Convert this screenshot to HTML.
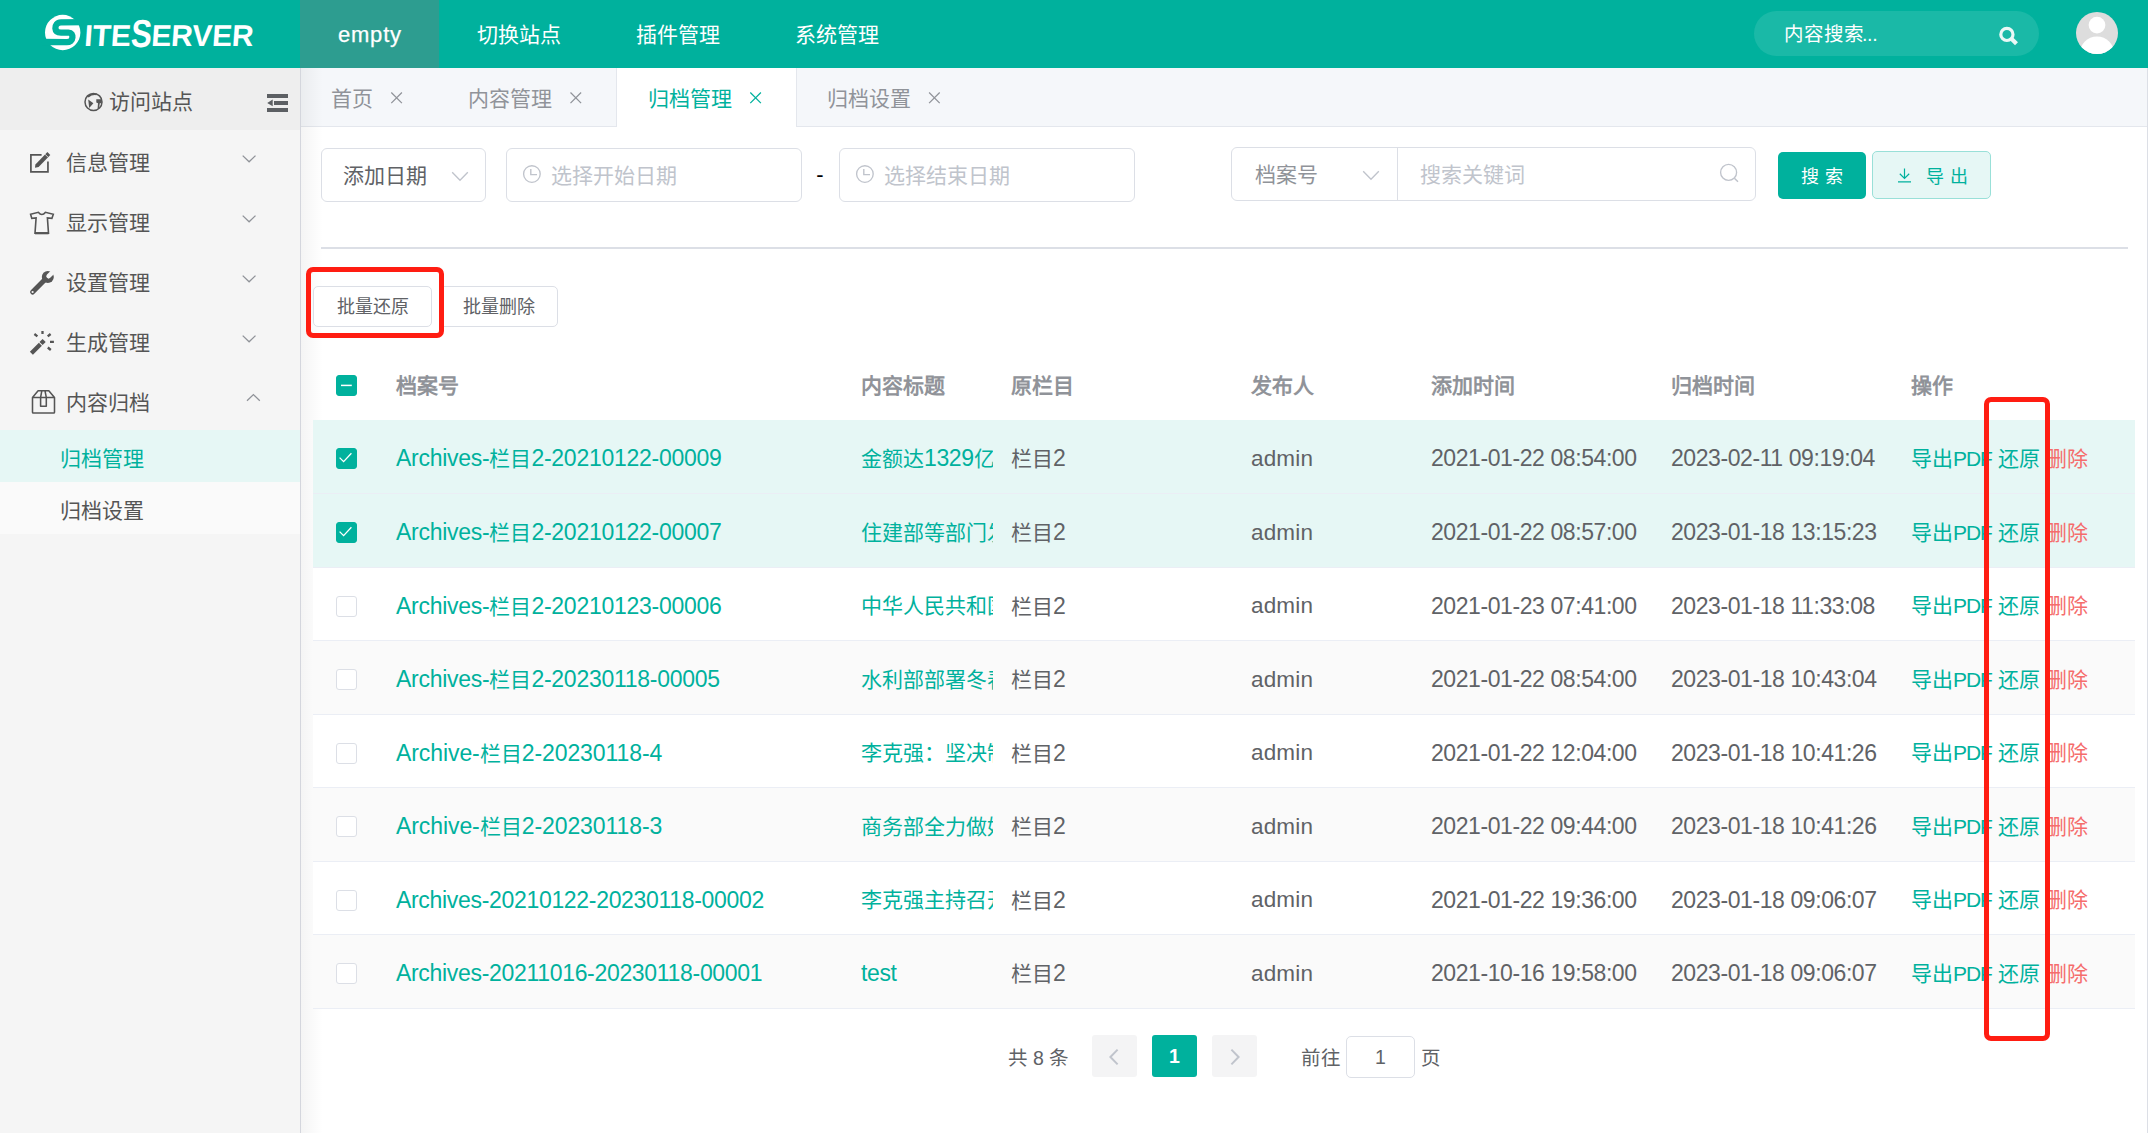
<!DOCTYPE html>
<html lang="zh-CN">
<head>
<meta charset="utf-8">
<title>归档管理 - SiteServer</title>
<style>
html,body{margin:0;padding:0;font-family:"Liberation Sans",sans-serif}
body{width:2148px;height:1133px;position:relative;overflow:hidden;background:#fff;font-family:"Liberation Sans",sans-serif;color:#606266;font-size:21px}
*{box-sizing:border-box}
.a{position:absolute;white-space:nowrap}
.j{display:inline-block;text-align:justify;text-align-last:justify;letter-spacing:0;text-indent:0}
div.j{display:block}
svg{position:absolute;overflow:visible}

/* ---------- top header ---------- */
#hdr{left:0;top:0;width:2148px;height:68px;background:#00b19d}
#logo-txt{left:83px;top:7.8px;height:50px;line-height:50px;color:#fff;font-weight:bold;font-size:30px;letter-spacing:-0.15px;transform:skewX(-4deg);transform-origin:0 100%}
#logo-txt b{font-size:39px;position:relative;top:0.5px;display:inline-block;transform:scaleX(.8);margin:0 -2.6px}
.nav{top:0;height:68px;line-height:70px;color:#fff;font-size:21px;text-align:center}
#nav0{left:300px;width:139px;background:#2d9d90}
#nav1{left:476.5px;width:84px}
#nav2{left:635.5px;width:84px}
#nav3{left:794.5px;width:84px}
#hsearch{left:1754px;top:11px;width:285px;height:45px;border-radius:23px;background:#1ab9a7}
#hsearch-t{left:1784px;top:11px;height:45px;line-height:46px;font-size:19.5px;color:#fff;letter-spacing:-0.35px}
#avatar{left:2076px;top:12px;width:42px;height:42px;border-radius:50%;background:#ddd;overflow:hidden}

/* ---------- sidebar ---------- */
#side{left:0;top:68px;width:301px;height:1065px;background:#f5f5f5;border-right:1px solid #d4d6dd}
#visit{left:0;top:68px;width:300px;height:62px;background:#eee}
#visit-t{left:109px;top:68px;height:62px;line-height:68px;font-size:21px;color:#555}
.mi{left:66px;height:60px;line-height:62px;font-size:21px;color:#555}
.sub{left:0;width:300px;height:52px}
.sub-t{left:60px;height:52px;line-height:58px;font-size:21px}

/* ---------- tab bar ---------- */
#tabs{left:301px;top:68px;width:1847px;height:59px;background:#f5f7fa;border-bottom:1px solid #e4e7ed}
#tab-act{left:616px;top:68px;width:181px;height:59px;background:#fff;border-left:1px solid #e4e7ed;border-right:1px solid #e4e7ed}
.tb{top:68px;height:58px;line-height:62px;font-size:21px;color:#909399}
#sshadow{left:301px;top:68px;width:22px;height:1065px;background:linear-gradient(90deg,rgba(0,0,0,.045),rgba(0,0,0,0))}
#redge{left:2147px;top:68px;width:1px;height:1065px;background:#dcdfe6}

/* ---------- main ---------- */
.inp{background:#fff;border:1px solid #dcdfe6;border-radius:6px}
.ft{height:54px;line-height:55px;font-size:21px}
.ph{color:#c0c4cc}
.btn{background:#fff;border:1px solid #dcdfe6;border-radius:5px}
.bt{height:41px;line-height:42px;font-size:18px;color:#606266;text-align:center}
.cb{width:21px;height:21px;border:1px solid #dcdfe6;border-radius:3px;background:#fff}
.cb.on{background:#00b19d;border-color:#00b19d}
.th{top:350px;height:70px;line-height:72px;font-size:21px;font-weight:bold;color:#909399}
.row{left:313px;width:1822px;border-bottom:1px solid #ebeef5;font-size:21px;color:#606266}
.row span{top:0}
.lk{color:#00b19d}
.c1{font-size:23px}
.cj{font-size:21px;font-style:normal}
.lt{font-size:23px;font-weight:normal;letter-spacing:-0.4px}
.c2{width:132px;overflow:hidden;letter-spacing:0.1px}
.c3{letter-spacing:0.2px}
.c4{font-size:22.5px;letter-spacing:0.17px}
.c5{font-size:23px;letter-spacing:-0.42px}
.c6{letter-spacing:-1.1px}
.pg{top:1036px;height:42px;line-height:44px;font-size:19.5px;color:#606266}
.pb{top:1035px;width:45px;height:42px;border-radius:3px;background:#f4f4f5}
.red{border:5px solid #ff1d12;border-radius:7px}
</style>
</head>
<body>

<!-- ================= HEADER ================= -->
<div class="a" id="hdr"></div>
<svg style="left:44px;top:14px" width="38" height="38" viewBox="44 14 38 38">
  <circle cx="62.7" cy="32.5" r="17.7" fill="#fff"/>
  <path d="M84 22.2 L61 22.4 C57 22.4 55.2 25.2 55.4 28.4 C55.6 31.6 58 32.6 61 32.6 L68.5 32.6 C71.5 32.6 72.6 34.8 72.4 37.6 C72.2 40.6 70 42.2 66.7 42.2 L42 42.0" fill="none" stroke="#00b19d" stroke-width="6.3"/>
</svg>
<div class="a" id="logo-txt">ITE<b>S</b>ERVER</div>

<div class="a nav" id="nav0" style="font-size:22px;line-height:69px;letter-spacing:0.8px;text-indent:0.8px;-webkit-text-stroke:0.25px #fff">empty</div>
<div class="a nav j" id="nav1">切换站点</div>
<div class="a nav j" id="nav2">插件管理</div>
<div class="a nav j" id="nav3">系统管理</div>

<div class="a" id="hsearch"></div>
<div class="a" id="hsearch-t"><span class="j" style="width:78px">内容搜索</span>...</div>
<svg style="left:1998px;top:25px" width="22" height="22" viewBox="0 0 22 22">
  <circle cx="8.9" cy="9.4" r="6.1" fill="none" stroke="#eaf8f6" stroke-width="3.2"/>
  <path d="M12.9 13.3 L18.5 18.7" stroke="#eaf8f6" stroke-width="4.2"/>
</svg>
<div class="a" id="avatar">
  <svg style="left:0;top:0" width="42" height="42" viewBox="0 0 42 42">
    <circle cx="21" cy="13.1" r="8.4" fill="#fff"/>
    <ellipse cx="21" cy="42.3" rx="17.5" ry="17.8" fill="#fff"/>
  </svg>
</div>

<!-- ================= SIDEBAR ================= -->
<div class="a" id="side"></div>
<div class="a" id="visit"></div>
<div class="a j" id="visit-t" style="width:84px">访问站点</div>

<div class="a mi j" style="top:132px;width:84px">信息管理</div>
<div class="a mi j" style="top:192px;width:84px">显示管理</div>
<div class="a mi j" style="top:252px;width:84px">设置管理</div>
<div class="a mi j" style="top:312px;width:84px">生成管理</div>
<div class="a mi j" style="top:372px;width:84px">内容归档</div>

<div class="a sub" style="top:430px;background:#e6f7f5"></div>
<div class="a sub" style="top:482px;background:#fafafa"></div>
<div class="a sub-t j" style="top:430px;color:#00b19d;width:84px">归档管理</div>
<div class="a sub-t j" style="top:482px;color:#555;width:84px">归档设置</div>

<!-- ================= TAB BAR ================= -->
<div class="a" id="tabs"></div>
<div class="a" id="tab-act"></div>
<div class="a tb j" style="left:331px;width:42px">首页</div>
<div class="a tb j" style="left:468px;width:84px">内容管理</div>
<div class="a tb j" style="left:648px;color:#00b19d;width:84px">归档管理</div>
<div class="a tb j" style="left:827px;width:84px">归档设置</div>
<div class="a" id="redge"></div>
<div class="a" id="sshadow"></div>

<!--ICONS-->
<svg id="icons" style="left:0;top:0" width="2148" height="1133" viewBox="0 0 2148 1133">
<circle cx="93.5" cy="101.9" r="8.5" fill="none" stroke="#555" stroke-width="1.5"/>
<path d="M88.2 99.6 L93.4 103.2 L89.2 108 Z M96.3 99.2 H101.8 V103.2 H99.8 L99 108.4 H97.6 L98 103.2 L96.3 102.6 Z M87 96 Q91 92.6 97 93.6 L96.4 95.2 Q92 94.6 88.6 97.4 Z" fill="#555"/>
<path d="M267 94 H288 V98 H267 Z M274 101 H288 V105 H274 Z M267 108 H288 V112 H267 Z M267.2 102.9 L272.7 99.5 V106.2 Z" fill="#5c5f63"/>
<path d="M41.6 154.85 H30.9 V171.95 H47.95 V161.6" fill="none" stroke="#555" stroke-width="1.7"/>
<path d="M35 167.8 L35.4 164.4 L47.4 152.1 L50.3 155.1 L38.6 167 Z" fill="#555"/>
<path d="M45 154.2 L48.2 157.4" stroke="#f5f5f5" stroke-width="0.8"/>
<path d="M30.6 214.3 L38.3 212.3 Q41.9 216.8 45.5 212.3 L53.3 214.3 L51.9 218.4 L47.4 217.9 L48.5 233.1 H35 L36.1 217.9 L31.8 218.4 Z" fill="none" stroke="#555" stroke-width="1.6" stroke-linejoin="miter"/>
<path d="M35 233.2 H48.5" stroke="#555" stroke-width="2.2"/>
<path d="M32.6 292 L46 278.6" stroke="#555" stroke-width="5" stroke-linecap="round"/>
<circle cx="47.8" cy="277.1" r="6" fill="#555"/>
<path d="M48.6 276.2 L55 269.8" stroke="#f5f5f5" stroke-width="4.6" stroke-linecap="round"/>
<circle cx="32.6" cy="292" r="1.1" fill="#f5f5f5"/>
<path d="M31.4 353.2 L40.4 344.3" stroke="#555" stroke-width="4.3"/>
<path d="M42.6 338.9 L45.7 342 L42.6 345.1 L39.5 342 Z" fill="#555"/>
<path d="M42.5 331 V333.9 M34.4 334 L37.4 336.3 M50.6 334 L47.7 336.4 M50 341.9 H53.9 M47.8 347.5 L50.8 350" stroke="#555" stroke-width="2.3"/>
<path d="M32.5 397.4 L38.1 390.7 H48.8 L54.5 397.4 V412.2 Q54.5 413 53.7 413 H33.3 Q32.5 413 32.5 412.2 Z M32.5 397.4 H54.5 M41.8 390.9 L40.6 397.4 V406.2 H46.3 V397.4 L45 390.9" fill="none" stroke="#555" stroke-width="1.55" stroke-linejoin="round"/>
<path d="M242.7 155.6 L249.1 161.79999999999998 L255.5 155.6" fill="none" stroke="#909399" stroke-width="1.3"/>
<path d="M242.7 215.6 L249.1 221.79999999999998 L255.5 215.6" fill="none" stroke="#909399" stroke-width="1.3"/>
<path d="M242.7 275.59999999999997 L249.1 281.8 L255.5 275.59999999999997" fill="none" stroke="#909399" stroke-width="1.3"/>
<path d="M242.7 335.59999999999997 L249.1 341.8 L255.5 335.59999999999997" fill="none" stroke="#909399" stroke-width="1.3"/>
<path d="M247.0 400.8 L253.4 394.59999999999997 L259.8 400.8" fill="none" stroke="#909399" stroke-width="1.3"/>
<path d="M391.3 92.5 L401.90000000000003 103.1 M401.90000000000003 92.5 L391.3 103.1" fill="none" stroke="#909399" stroke-width="1.25"/>
<path d="M570.5 92.5 L581.0999999999999 103.1 M581.0999999999999 92.5 L570.5 103.1" fill="none" stroke="#909399" stroke-width="1.25"/>
<path d="M750.3000000000001 92.5 L760.9 103.1 M760.9 92.5 L750.3000000000001 103.1" fill="none" stroke="#00b19d" stroke-width="1.25"/>
<path d="M929.1 92.5 L939.6999999999999 103.1 M939.6999999999999 92.5 L929.1 103.1" fill="none" stroke="#909399" stroke-width="1.25"/>
</svg>
<!--/ICONS-->

<!-- ================= MAIN ================= -->
<!--MAIN-->
<div class="a inp" style="left:321px;top:148px;width:165px;height:54px"></div>
<div class="a ft j" style="left:343px;top:148px;color:#606266;width:84px">添加日期</div>
<svg style="left:451px;top:171px" width="18" height="12" viewBox="0 0 18 12"><path d="M1.2 1.3 L9 9.2 L16.8 1.3" fill="none" stroke="#c0c4cc" stroke-width="1.35"/></svg>
<div class="a inp" style="left:506px;top:148px;width:296px;height:54px"></div>
<svg style="left:522px;top:165px" width="19" height="19" viewBox="0 0 19 19"><circle cx="9.9" cy="9" r="8.3" fill="none" stroke="#c0c4cc" stroke-width="1.35"/><path d="M8.8 4 V9.6 H15" fill="none" stroke="#c0c4cc" stroke-width="1.4"/></svg>
<div class="a ft ph j" style="left:551px;top:148px;width:126px">选择开始日期</div>
<div class="a" style="left:816.3px;top:148px;height:54px;line-height:54px;font-size:22px;color:#000">-</div>
<div class="a inp" style="left:839px;top:148px;width:296px;height:54px"></div>
<svg style="left:855px;top:165px" width="19" height="19" viewBox="0 0 19 19"><circle cx="9.9" cy="9" r="8.3" fill="none" stroke="#c0c4cc" stroke-width="1.35"/><path d="M8.8 4 V9.6 H15" fill="none" stroke="#c0c4cc" stroke-width="1.4"/></svg>
<div class="a ft ph j" style="left:884px;top:148px;width:126px">选择结束日期</div>
<div class="a inp" style="left:1231px;top:147px;width:525px;height:54px"></div>
<div class="a" style="left:1397px;top:148px;width:1px;height:52px;background:#dcdfe6"></div>
<div class="a ft j" style="left:1255px;top:147px;color:#909399;width:63px">档案号</div>
<svg style="left:1362px;top:170px" width="18" height="12" viewBox="0 0 18 12"><path d="M1.2 1.3 L9 9.2 L16.8 1.3" fill="none" stroke="#c0c4cc" stroke-width="1.35"/></svg>
<div class="a ft ph j" style="left:1420px;top:147px;width:105px">搜索关键词</div>
<svg style="left:1719px;top:163px" width="21" height="21" viewBox="0 0 21 21"><circle cx="9.6" cy="9.4" r="8" fill="none" stroke="#c0c4cc" stroke-width="1.35"/><path d="M15.4 15.2 L19 18.8" stroke="#c0c4cc" stroke-width="1.5"/></svg>
<div class="a" style="left:1778px;top:152px;width:88px;height:47px;border-radius:5px;background:#00b19d"></div>
<div class="a" style="left:1801px;top:152px;height:47px;line-height:50px;font-size:18px;color:#fff;width:42px;text-align:justify;text-align-last:justify">搜 索</div>
<div class="a" style="left:1872px;top:151px;width:119px;height:48px;border-radius:5px;background:#e6f7f5;border:1px solid #99e0d8"></div>
<svg style="left:1897px;top:168px" width="15" height="15" viewBox="0 0 15 15"><path d="M7.5 0.5 V10.2 M2.8 5.8 L7.5 10.4 L12.2 5.8 M1 13.9 H14" fill="none" stroke="#00b19d" stroke-width="1.2"/></svg>
<div class="a" style="left:1926px;top:152px;height:47px;line-height:50px;font-size:18px;color:#00b19d;width:42px;text-align:justify;text-align-last:justify">导 出</div>
<div class="a" style="left:321px;top:247px;width:1807px;height:2px;background:#dcdfe6"></div>
<div class="a btn" style="left:439px;top:286px;width:119px;height:41px"></div>
<div class="a btn" style="left:313px;top:286px;width:119px;height:41px"></div>
<div class="a bt j" style="left:336.5px;top:286px;width:72px">批量还原</div>
<div class="a bt j" style="left:462.5px;top:286px;width:72px">批量删除</div>
<div class="a cb on" style="left:336px;top:375px"><svg style="left:0;top:0" width="19" height="19" viewBox="0 0 19 19"><path d="M4 9.4 H14.8" stroke="#fff" stroke-width="1.5"/></svg></div>
<div class="a th j" style="left:396px;width:63px">档案号</div>
<div class="a th j" style="left:861px;width:84px">内容标题</div>
<div class="a th j" style="left:1011px;width:63px">原栏目</div>
<div class="a th j" style="left:1251px;width:63px">发布人</div>
<div class="a th j" style="left:1431px;width:84px">添加时间</div>
<div class="a th j" style="left:1671px;width:84px">归档时间</div>
<div class="a th j" style="left:1911px;width:42px">操作</div>
<div class="a row" style="top:420px;height:74px;line-height:77px;background:#e6f7f5">
<div class="a cb on" style="left:23px;top:28px"><svg style="left:1px;top:2.4px" width="15" height="13" viewBox="0 0 15 13"><path d="M1.6 6.6 L5.6 10.6 L13.4 2.2" fill="none" stroke="#fff" stroke-width="1.3"/></svg></div>
<span class="a lk c1" style="left:83px;letter-spacing:-0.27px">Archives-<i class="cj j" style="width:42px">栏目</i>2-20210122-00009</span>
<span class="a lk c2" style="left:548px"><i class="cj j" style="width:63px">金额达</i><b class="lt">1329</b><i class="cj j" style="width:210px">亿元！多地发放消费券</i></span>
<span class="a c3" style="left:698px"><i class="cj j" style="width:42px">栏目</i><b class="lt">2</b></span>
<span class="a c4" style="left:938px">admin</span>
<span class="a c5" style="left:1118px">2021-01-22 08:54:00</span>
<span class="a c5" style="left:1358px">2023-02-11 09:19:04</span>
<span class="a lk c6" style="left:1598px"><i class="cj j" style="width:42px">导出</i>PDF</span>
<span class="a lk j" style="left:1685px;width:42px">还原</span>
<span class="a j" style="left:1733px;color:#f56c6c;width:42px">删除</span>
</div>
<div class="a row" style="top:494px;height:74px;line-height:77px;background:#e6f7f5">
<div class="a cb on" style="left:23px;top:28px"><svg style="left:1px;top:2.4px" width="15" height="13" viewBox="0 0 15 13"><path d="M1.6 6.6 L5.6 10.6 L13.4 2.2" fill="none" stroke="#fff" stroke-width="1.3"/></svg></div>
<span class="a lk c1" style="left:83px;letter-spacing:-0.27px">Archives-<i class="cj j" style="width:42px">栏目</i>2-20210122-00007</span>
<span class="a lk c2" style="left:548px"><i class="cj j" style="width:252px">住建部等部门发布通知要求</i></span>
<span class="a c3" style="left:698px"><i class="cj j" style="width:42px">栏目</i><b class="lt">2</b></span>
<span class="a c4" style="left:938px">admin</span>
<span class="a c5" style="left:1118px">2021-01-22 08:57:00</span>
<span class="a c5" style="left:1358px">2023-01-18 13:15:23</span>
<span class="a lk c6" style="left:1598px"><i class="cj j" style="width:42px">导出</i>PDF</span>
<span class="a lk j" style="left:1685px;width:42px">还原</span>
<span class="a j" style="left:1733px;color:#f56c6c;width:42px">删除</span>
</div>
<div class="a row" style="top:568px;height:73px;line-height:76px;background:#fff">
<div class="a cb" style="left:23px;top:28px"></div>
<span class="a lk c1" style="left:83px;letter-spacing:-0.27px">Archives-<i class="cj j" style="width:42px">栏目</i>2-20210123-00006</span>
<span class="a lk c2" style="left:548px"><i class="cj j" style="width:231px">中华人民共和国国务院令</i></span>
<span class="a c3" style="left:698px"><i class="cj j" style="width:42px">栏目</i><b class="lt">2</b></span>
<span class="a c4" style="left:938px">admin</span>
<span class="a c5" style="left:1118px">2021-01-23 07:41:00</span>
<span class="a c5" style="left:1358px">2023-01-18 11:33:08</span>
<span class="a lk c6" style="left:1598px"><i class="cj j" style="width:42px">导出</i>PDF</span>
<span class="a lk j" style="left:1685px;width:42px">还原</span>
<span class="a j" style="left:1733px;color:#f56c6c;width:42px">删除</span>
</div>
<div class="a row" style="top:641px;height:74px;line-height:77px;background:#fafafa">
<div class="a cb" style="left:23px;top:28px"></div>
<span class="a lk c1" style="left:83px;letter-spacing:-0.27px">Archives-<i class="cj j" style="width:42px">栏目</i>2-20230118-00005</span>
<span class="a lk c2" style="left:548px"><i class="cj j" style="width:231px">水利部部署冬春农田水利</i></span>
<span class="a c3" style="left:698px"><i class="cj j" style="width:42px">栏目</i><b class="lt">2</b></span>
<span class="a c4" style="left:938px">admin</span>
<span class="a c5" style="left:1118px">2021-01-22 08:54:00</span>
<span class="a c5" style="left:1358px">2023-01-18 10:43:04</span>
<span class="a lk c6" style="left:1598px"><i class="cj j" style="width:42px">导出</i>PDF</span>
<span class="a lk j" style="left:1685px;width:42px">还原</span>
<span class="a j" style="left:1733px;color:#f56c6c;width:42px">删除</span>
</div>
<div class="a row" style="top:715px;height:73px;line-height:76px;background:#fff">
<div class="a cb" style="left:23px;top:28px"></div>
<span class="a lk c1" style="left:83px;letter-spacing:-0.083px">Archive-<i class="cj j" style="width:42px">栏目</i>2-20230118-4</span>
<span class="a lk c2" style="left:548px"><i class="cj j" style="width:273px">李克强：坚决制止耕地非农化</i></span>
<span class="a c3" style="left:698px"><i class="cj j" style="width:42px">栏目</i><b class="lt">2</b></span>
<span class="a c4" style="left:938px">admin</span>
<span class="a c5" style="left:1118px">2021-01-22 12:04:00</span>
<span class="a c5" style="left:1358px">2023-01-18 10:41:26</span>
<span class="a lk c6" style="left:1598px"><i class="cj j" style="width:42px">导出</i>PDF</span>
<span class="a lk j" style="left:1685px;width:42px">还原</span>
<span class="a j" style="left:1733px;color:#f56c6c;width:42px">删除</span>
</div>
<div class="a row" style="top:788px;height:74px;line-height:77px;background:#fafafa">
<div class="a cb" style="left:23px;top:28px"></div>
<span class="a lk c1" style="left:83px;letter-spacing:-0.083px">Archive-<i class="cj j" style="width:42px">栏目</i>2-20230118-3</span>
<span class="a lk c2" style="left:548px"><i class="cj j" style="width:252px">商务部全力做好生活必需品</i></span>
<span class="a c3" style="left:698px"><i class="cj j" style="width:42px">栏目</i><b class="lt">2</b></span>
<span class="a c4" style="left:938px">admin</span>
<span class="a c5" style="left:1118px">2021-01-22 09:44:00</span>
<span class="a c5" style="left:1358px">2023-01-18 10:41:26</span>
<span class="a lk c6" style="left:1598px"><i class="cj j" style="width:42px">导出</i>PDF</span>
<span class="a lk j" style="left:1685px;width:42px">还原</span>
<span class="a j" style="left:1733px;color:#f56c6c;width:42px">删除</span>
</div>
<div class="a row" style="top:862px;height:73px;line-height:76px;background:#fff">
<div class="a cb" style="left:23px;top:28px"></div>
<span class="a lk c1" style="left:83px;letter-spacing:-0.316px">Archives-20210122-20230118-00002</span>
<span class="a lk c2" style="left:548px"><i class="cj j" style="width:294px">李克强主持召开国务院常务会议</i></span>
<span class="a c3" style="left:698px"><i class="cj j" style="width:42px">栏目</i><b class="lt">2</b></span>
<span class="a c4" style="left:938px">admin</span>
<span class="a c5" style="left:1118px">2021-01-22 19:36:00</span>
<span class="a c5" style="left:1358px">2023-01-18 09:06:07</span>
<span class="a lk c6" style="left:1598px"><i class="cj j" style="width:42px">导出</i>PDF</span>
<span class="a lk j" style="left:1685px;width:42px">还原</span>
<span class="a j" style="left:1733px;color:#f56c6c;width:42px">删除</span>
</div>
<div class="a row" style="top:935px;height:74px;line-height:77px;background:#fafafa">
<div class="a cb" style="left:23px;top:28px"></div>
<span class="a lk c1" style="left:83px;letter-spacing:-0.316px">Archives-20211016-20230118-00001</span>
<span class="a lk c2" style="left:548px;letter-spacing:-0.37px;font-size:23px">test</span>
<span class="a c3" style="left:698px"><i class="cj j" style="width:42px">栏目</i><b class="lt">2</b></span>
<span class="a c4" style="left:938px">admin</span>
<span class="a c5" style="left:1118px">2021-10-16 19:58:00</span>
<span class="a c5" style="left:1358px">2023-01-18 09:06:07</span>
<span class="a lk c6" style="left:1598px"><i class="cj j" style="width:42px">导出</i>PDF</span>
<span class="a lk j" style="left:1685px;width:42px">还原</span>
<span class="a j" style="left:1733px;color:#f56c6c;width:42px">删除</span>
</div>
<div class="a pg" style="left:1008px"><span class="j" style="width:19.5px;text-align:center;text-align-last:center">共</span> 8 <span class="j" style="width:19.5px;text-align:center;text-align-last:center">条</span></div>
<div class="a pb" style="left:1092px"></div>
<svg style="left:1108px;top:1048px" width="12" height="18" viewBox="0 0 12 18"><path d="M9.6 1.6 L2.4 9 L9.6 16.4" fill="none" stroke="#c0c4cc" stroke-width="2"/></svg>
<div class="a pb" style="left:1152px;background:#00b19d;color:#fff;font-weight:bold;text-align:center;line-height:42px;font-size:19.5px">1</div>
<div class="a pb" style="left:1212px"></div>
<svg style="left:1229px;top:1048px" width="12" height="18" viewBox="0 0 12 18"><path d="M2.4 1.6 L9.6 9 L2.4 16.4" fill="none" stroke="#c0c4cc" stroke-width="2"/></svg>
<div class="a pg j" style="left:1301px;width:39px">前往</div>
<div class="a" style="left:1346px;top:1036px;width:69px;height:42px;border:1px solid #dcdfe6;border-radius:5px;background:#fff;text-align:center;line-height:40px;font-size:19.5px;color:#606266">1</div>
<div class="a pg" style="left:1421px;width:19.5px;text-align:center">页</div>
<div class="a red" style="left:306px;top:267px;width:138px;height:71px"></div>
<div class="a red" style="left:1984px;top:397px;width:66px;height:644px"></div>
<!--/MAIN-->

</body>
</html>
